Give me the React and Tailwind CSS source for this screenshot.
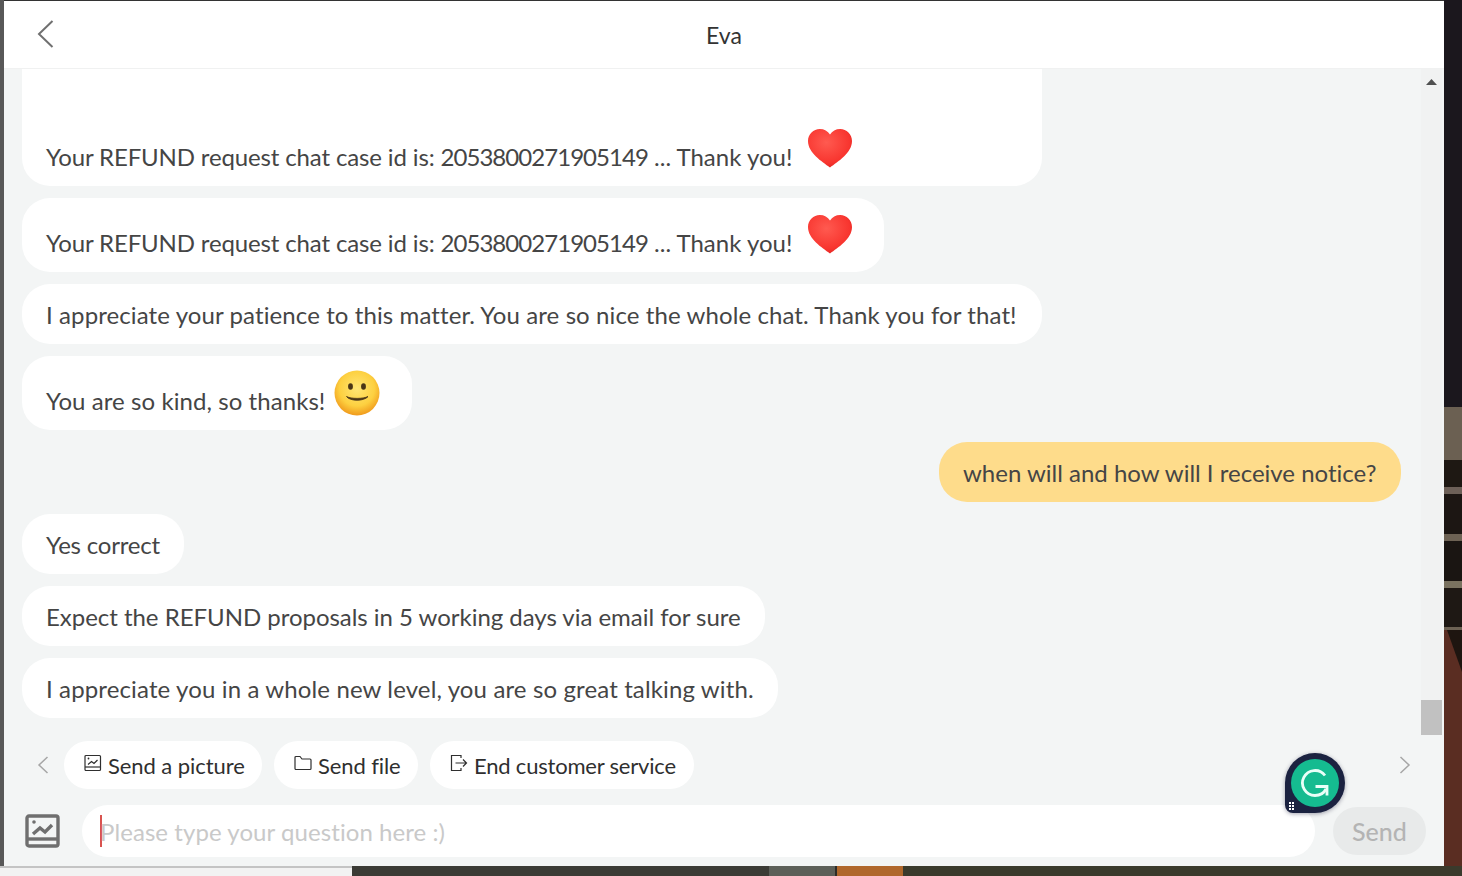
import React from "react";

const font = { fontFamily: 'Lato,"Open Sans",sans-serif' };

function Heart() {
  return (
    <svg width="46" height="40" viewBox="0 0 46 40" className="shrink-0 block">
      <defs>
        <radialGradient id="hg" cx="0.42" cy="0.35" r="0.75">
          <stop offset="0" stopColor="#ff5a50" />
          <stop offset="0.7" stopColor="#f8352f" />
          <stop offset="1" stopColor="#d8201f" />
        </radialGradient>
      </defs>
      <path d="M23 39.500C15 33.500 1 25 1 13C1 6 6.500 1 12.800 1C17.200 1 20.800 3 23 6.500C25.200 3 28.800 1 33.200 1C39.500 1 45 6 45 13C45 25 31 33.500 23 39.500Z" fill="url(#hg)" />
    </svg>
  );
}

function Smile() {
  return (
    <svg width="46" height="46" viewBox="0 0 46 46" className="shrink-0 block">
      <defs>
        <radialGradient id="sg" cx="0.5" cy="0.4" r="0.6">
          <stop offset="0" stopColor="#ffe675" />
          <stop offset="0.65" stopColor="#fdd040" />
          <stop offset="1" stopColor="#f09a1c" />
        </radialGradient>
      </defs>
      <circle cx="23" cy="23" r="22.500" fill="url(#sg)" />
      <ellipse cx="16.500" cy="16.500" rx="2.400" ry="3.200" fill="#4a3516" />
      <ellipse cx="29.500" cy="16.500" rx="2.400" ry="3.200" fill="#4a3516" />
      <path d="M12.500 26.500C16 31.500 30 31.500 34 26.500C29 29 17 29 12.500 26.500Z" fill="#4a3516" stroke="#4a3516" strokeWidth="0.800" strokeLinejoin="round" />
    </svg>
  );
}

function PicIcon({ size = 18, sw = 1.2 }) {
  return (
    <svg width={size} height={size} viewBox="0 0 18 18" fill="none" stroke="currentColor" strokeWidth={sw}>
      <rect x="1" y="1.500" width="15.500" height="15" rx="1" />
      <path d="M1 13h15.500" />
      <path d="M4 10.500l3.500-3 2.500 2 3.500-3.500" />
      <circle cx="4.500" cy="4.500" r="0.900" fill="currentColor" stroke="none" />
    </svg>
  );
}

function Bubble({ children, className = "", mine = false }) {
  return (
    <div
      className={`flex items-center px-6 text-[24px] leading-[32px] text-[#454545] whitespace-nowrap [font-variant-ligatures:none] ${
        mine ? "bg-[#fedc8b] self-end mr-[20px]" : "bg-white self-start"
      } ${className}`}
    >
      {children}
    </div>
  );
}

function RefundLine() {
  return (
    <span className="whitespace-pre">
      <span className="tracking-[-0.14px]">Your REFUND request chat case id is: </span>
      <span className="tracking-[-0.96px]">2053800271905149</span>
      <span> ... Thank you!</span>
    </span>
  );
}

function Chip({ icon, label, className = "", labelClass = "" }) {
  return (
    <div className={`h-12 rounded-full bg-white flex items-center text-[#2f2f2f] text-[22px] [font-variant-ligatures:none] ${className}`}>
      {icon}
      <span className={labelClass}>{label}</span>
    </div>
  );
}

export default function App() {
  return (
    <div style={font} className="w-[1462px] h-[876px] overflow-hidden flex flex-col bg-[#211b1c]">
      <div className="h-[866px] flex shrink-0">
        <div className="w-1 bg-[#585858] shrink-0" />
        <div className="w-[1440px] flex flex-col shrink-0 border-t border-[#333333] relative">
          <header className="h-[68px] shrink-0 bg-white border-b border-[#f0f1f1] flex items-center relative">
            <svg className="ml-[33px] mb-[2px]" width="18" height="28" viewBox="0 0 18 28" fill="none" stroke="#707070" strokeWidth="2">
              <path d="M15.500 1L2 14l13.500 13" />
            </svg>
            <div className="flex-1 text-center text-[23px] text-[#333333] pr-[51px] pt-[2px]">Eva</div>
          </header>

          <div className="h-[666px] shrink-0 bg-[#f3f5f5] flex overflow-hidden">
            <div className="flex-1 flex flex-col gap-3 pl-[18px]">
              <Bubble className="h-[117px] w-[1020px] rounded-b-[28px] items-end pb-[13px]">
                <RefundLine />
                <span className="ml-[15px] mb-[5px]"><Heart /></span>
              </Bubble>
              <Bubble className="h-[74px] w-[862px] rounded-[28px] items-end pb-[13px]">
                <RefundLine />
                <span className="ml-[15px] mb-[5px]"><Heart /></span>
              </Bubble>
              <Bubble className="h-[60px] w-[1020px] rounded-[28px] pt-[2px] tracking-[0.1px]">
                I appreciate your patience to this matter. You are so nice the whole chat. Thank you for that!
              </Bubble>
              <Bubble className="h-[74px] w-[390px] rounded-[28px] items-end pb-[13px]">
                <span className="tracking-[0.07px]">You are so kind, so thanks!</span>
                <span className="ml-[9px] mb-[1px] block h-[46px]"><Smile /></span>
              </Bubble>
              <Bubble mine className="h-[60px] w-[462px] rounded-[28px] pt-[2px]">when will and how will I receive notice?</Bubble>
              <Bubble className="h-[60px] w-[162px] rounded-[28px] pt-[2px] tracking-[-0.2px]">Yes correct</Bubble>
              <Bubble className="h-[60px] w-[743px] rounded-[28px] pt-[2px] tracking-[-0.03px]">Expect the REFUND proposals in 5 working days via email for sure</Bubble>
              <Bubble className="h-[60px] w-[756px] rounded-[28px] pt-[2px] tracking-[0.13px]">I appreciate you in a whole new level, you are so great talking with.</Bubble>
            </div>
            <div className="w-[21px] shrink-0 mr-[2px] flex flex-col items-center justify-between bg-[#f1f2f2]">
              <svg className="mt-[10px]" width="11" height="6" viewBox="0 0 11 6"><path d="M5.500 0L11 6H0Z" fill="#505050" /></svg>
              <div className="w-[21px] h-[35px] bg-[#c1c1c1]" />
            </div>
          </div>

          <div className="flex-1 bg-[#f3f5f5] relative">
            <div className="h-[60px] flex items-center">
              <svg className="ml-[33px]" width="12" height="18" viewBox="0 0 12 18" fill="none" stroke="#a6a6a6" strokeWidth="1.500">
                <path d="M10.500 1L2 9l8.500 8" />
              </svg>
              <Chip
                className="ml-[15px] w-[198px] pl-[20px] gap-[6px]"
                labelClass="tracking-[-0.07px]"
                icon={<span className="mb-[5px]"><PicIcon /></span>}
                label="Send a picture"
              />
              <Chip
                className="ml-3 w-[144px] pl-[20px] gap-[6px]"
                labelClass="tracking-[-0.1px]"
                icon={
                  <svg className="mb-[5px]" width="18" height="16" viewBox="0 0 18 16" fill="none" stroke="currentColor" strokeWidth="1.200">
                    <path d="M1 2.500A1 1 0 0 1 2 1.500h4l2 2.500h8a1 1 0 0 1 1 1v8.500a1 1 0 0 1-1 1H2a1 1 0 0 1-1-1Z" />
                  </svg>
                }
                label="Send file"
              />
              <Chip
                className="ml-3 w-[264px] pl-[20px] gap-[6px]"
                labelClass="tracking-[-0.2px]"
                icon={
                  <svg className="mb-[5px]" width="18" height="18" viewBox="0 0 18 18" fill="none" stroke="currentColor" strokeWidth="1.200">
                    <path d="M11 4V1.500H1.500v15H11V14" />
                    <path d="M5.500 9h11M13 5.500L16.500 9 13 12.500" />
                  </svg>
                }
                label="End customer service"
              />
              <svg className="ml-auto mr-[33px]" width="12" height="18" viewBox="0 0 12 18" fill="none" stroke="#a6a6a6" strokeWidth="1.500">
                <path d="M1.500 1L10 9l-8.500 8" />
              </svg>
            </div>
            <div className="flex items-start mt-[10px]">
              <div className="ml-[21px] mt-[8px] text-[#6f6f6f]"><PicIcon size={36} sw={1.7} /></div>
              <div className="ml-[21px] h-[52px] w-[1233px] rounded-[26px] bg-white flex items-center pl-[18px] text-[24px] text-[#c9c9c9] pt-[2px]">
                <span className="w-[2px] h-[32px] bg-[#d9534f] -mr-[2px] -mt-[2px]" />
                <span className="tracking-[0.07px]">Please type your question here :)</span>
              </div>
              <div className="ml-[18px] mt-[2px] w-[93px] h-[48px] rounded-full bg-[#e8eaea] flex items-center justify-center text-[25px] font-medium text-[#b4b4b4] pt-[2px]">
                Send
              </div>
            </div>
            <div className="absolute left-[1281px] top-[18px] w-[60px] h-[60px] bg-[#1b2240] rounded-[30px_30px_30px_8px] flex items-center justify-center shadow-[0_1px_4px_rgba(30,30,60,0.4)]">
              <div className="w-12 h-12 rounded-full bg-[#15bb90] flex items-center justify-center">
                <svg width="30" height="30" viewBox="0 0 30 30" fill="none" stroke="#e9fff8" strokeWidth="2.800">
                  <path d="M25 7.500A12.500 12.500 0 1 0 15 27.500c5 0 9-2.500 11-6.500" />
                  <path d="M15.500 18.500H27v9" />
                </svg>
              </div>
              <div className="absolute left-[4px] bottom-[3px] grid grid-cols-2 gap-[1px]">
                <span className="w-[2px] h-[2px] bg-white" />
                <span className="w-[2px] h-[2px] bg-white" />
                <span className="w-[2px] h-[2px] bg-white" />
                <span className="w-[2px] h-[2px] bg-white" />
                <span className="w-[2px] h-[2px] bg-white" />
                <span className="w-[2px] h-[2px] bg-white" />
              </div>
            </div>
          </div>
        </div>
        <div className="flex-1 flex flex-col bg-[#1b171d]">
          <div className="h-[407px] bg-[#1b171d]" />
          <div className="h-[53px] bg-[#6b6052]" />
          <div className="h-[27px] bg-[#1e1813]" />
          <div className="h-[7px] bg-[#6d6058]" />
          <div className="h-[40px] bg-[#1c1613]" />
          <div className="h-[7px] bg-[#6d6254]" />
          <div className="h-[40px] bg-[#1a1512]" />
          <div className="h-[7px] bg-[#7a7260]" />
          <div className="h-[39px] bg-[#1e1814]" />
          <div className="h-[3px] bg-[#6d6254]" />
          <svg className="flex-1 block" width="18" viewBox="0 0 18 236" preserveAspectRatio="none">
            <rect width="18" height="236" fill="#5a2d22" />
            <path d="M3 0H18V42Z" fill="#1e1510" />
          </svg>
        </div>
      </div>
      <div className="flex-1 flex">
        <div className="w-[352px] bg-[#f2f2f2] border-t-2 border-[#c4c4c4]" />
        <div className="w-[417px] bg-[#3b3b35]" />
        <div className="w-[66px] bg-[#5c5f58]" />
        <div className="w-[2px] bg-[#2c2c28]" />
        <div className="w-[66px] bg-[#b0672b]" />
        <div className="flex-1 bg-[#3a3a2c]" />
      </div>
    </div>
  );
}
